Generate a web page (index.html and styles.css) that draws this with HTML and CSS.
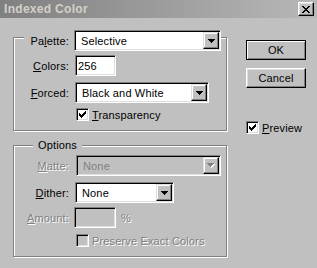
FILE: index.html
```html
<!DOCTYPE html>
<html>
<head>
<meta charset="utf-8">
<link rel="stylesheet" href="styles.css">
</head>
<body>
<div class="titlebar">
  <span class="title-text">Indexed Color</span>
  <div class="close"><svg width="8" height="7" viewBox="0 0 8 7" shape-rendering="crispEdges"><path d="M0 0h2v1h-2z M6 0h2v1h-2z M1 1h2v1h-2z M5 1h2v1h-2z M2 2h4v1h-4z M3 3h2v1h-2z M2 4h4v1h-4z M1 5h2v1h-2z M5 5h2v1h-2z M0 6h2v1h-2z M6 6h2v1h-2z" fill="#000"/></svg></div>
</div>
<div class="main">
  <div class="left">
    <div class="group group-main">
      <div class="row row-legend">
        <span class="lbl lbl-legend">Pa<u>l</u>ette:</span>
        <div class="combo combo-palette"><span class="combo-text">Selective</span><span class="dd"><svg width="7" height="4" viewBox="0 0 7 4" shape-rendering="crispEdges"><path d="M0 0h7v1h-7z M1 1h5v1h-5z M2 2h3v1h-3z M3 3h1v1h-1z" fill="#000"/></svg></span></div>
      </div>
      <div class="row row-colors">
        <span class="lbl"><u>C</u>olors:</span>
        <div class="field field-colors">256</div>
      </div>
      <div class="row row-forced">
        <span class="lbl"><u>F</u>orced:</span>
        <div class="combo combo-forced"><span class="combo-text">Black and White</span><span class="dd"><svg width="7" height="4" viewBox="0 0 7 4" shape-rendering="crispEdges"><path d="M0 0h7v1h-7z M1 1h5v1h-5z M2 2h3v1h-3z M3 3h1v1h-1z" fill="#000"/></svg></span></div>
      </div>
      <div class="row row-check row-transp">
        <span class="checkbox"><svg width="7" height="7" viewBox="0 0 7 7" shape-rendering="crispEdges"><path d="M6 0h1v1h-1z M5 1h2v1h-2z M0 2h1v1h-1z M4 2h3v1h-3z M0 3h2v1h-2z M3 3h3v1h-3z M0 4h5v1h-5z M1 5h3v1h-3z M2 6h1v1h-1z" fill="#000"/></svg></span>
        <span class="check-label"><u>T</u>ransparency</span>
      </div>
    </div>
    <div class="group group-options">
      <div class="legend">Options</div>
      <div class="row row-matte">
        <span class="lbl dis"><u>M</u>atte:</span>
        <div class="combo combo-matte disabled"><span class="combo-text">None</span><span class="dd"><svg width="8" height="5" viewBox="0 0 8 5" shape-rendering="crispEdges"><path d="M1 1h7v1h-7z M2 2h5v1h-5z M3 3h3v1h-3z M4 4h1v1h-1z" fill="#fff"/><path d="M0 0h7v1h-7z M1 1h5v1h-5z M2 2h3v1h-3z M3 3h1v1h-1z" fill="#808080"/></svg></span></div>
      </div>
      <div class="row row-dither">
        <span class="lbl"><u>D</u>ither:</span>
        <div class="combo combo-dither"><span class="combo-text">None</span><span class="dd"><svg width="7" height="4" viewBox="0 0 7 4" shape-rendering="crispEdges"><path d="M0 0h7v1h-7z M1 1h5v1h-5z M2 2h3v1h-3z M3 3h1v1h-1z" fill="#000"/></svg></span></div>
      </div>
      <div class="row row-amount">
        <span class="lbl dis"><u>A</u>mount:</span>
        <div class="field field-amount disabled"></div>
        <span class="pct dis">%</span>
      </div>
      <div class="row row-check row-preserve">
        <span class="checkbox disabled"></span>
        <span class="check-label dis">Preserve Exact Colors</span>
      </div>
    </div>
  </div>
  <div class="right">
    <div class="btn btn-default">OK</div>
    <div class="btn btn-cancel">Cancel</div>
    <div class="row row-preview">
      <span class="checkbox"><svg width="7" height="7" viewBox="0 0 7 7" shape-rendering="crispEdges"><path d="M6 0h1v1h-1z M5 1h2v1h-2z M0 2h1v1h-1z M4 2h3v1h-3z M0 3h2v1h-2z M3 3h3v1h-3z M0 4h5v1h-5z M1 5h3v1h-3z M2 6h1v1h-1z" fill="#000"/></svg></span>
      <span class="check-label"><u>P</u>review</span>
    </div>
  </div>
</div>
</body>
</html>
```
FILE: styles.css
```css
html, body {
  margin: 0;
  padding: 0;
}
body {
  width: 317px;
  height: 268px;
  overflow: hidden;
  background: #c0c0c0;
  font-family: "Liberation Sans", Arial, sans-serif;
  font-size: 11px;
  letter-spacing: 0.15px;
  color: #000;
}
u {
  text-decoration: underline;
  text-underline-offset: 1px;
}

/* title bar */
.titlebar {
  height: 18px;
  display: flex;
  align-items: center;
  justify-content: space-between;
  padding: 0 3px 0 4px;
  background: linear-gradient(to right, #808080, #b8b8b8);
}
.title-text {
  font-weight: bold;
  font-size: 12px;
  color: #d4d0c8;
  letter-spacing: 0.3px;
}
.close {
  width: 16px;
  height: 14px;
  box-sizing: border-box;
  background: #c0c0c0;
  border: 1px solid;
  border-color: #fff #000 #000 #fff;
  box-shadow: inset -1px -1px 0 #808080, inset 1px 1px 0 #dfdfdf;
  display: flex;
  align-items: center;
  justify-content: center;
}
.close svg { display: block; }

/* layout */
.main {
  display: flex;
  align-items: flex-start;
  padding-left: 13px;
}
.left {
  display: flex;
  flex-direction: column;
}
.right {
  margin-left: 19px;
  padding-top: 22px;
  display: flex;
  flex-direction: column;
  align-items: flex-start;
}

/* group boxes */
.group {
  box-sizing: border-box;
  width: 214px;
  border: 1px solid #808080;
  box-shadow: 1px 1px 0 #fff, inset 1px 1px 0 #fff;
  display: flex;
  flex-direction: column;
  align-items: flex-start;
  padding-bottom: 9px;
}
.group-main { margin-top: 19px; }
.group-options { margin-top: 14px; }

.legend {
  margin-top: -7px;
  margin-left: 19px;
  padding: 0 5px;
  line-height: 13px;
  height: 13px;
  background: #c0c0c0;
}

.row {
  display: flex;
  align-items: center;
}
.lbl {
  width: 55px;
  margin-right: 6px;
  text-align: right;
  white-space: nowrap;
}
.row-legend {
  margin-top: -8px;
  margin-left: 10px;
  background: #c0c0c0;
}
.lbl-legend {
  width: 45px;
  margin-right: 5px;
}
.row-colors { margin-top: 4px; }
.row-forced { margin-top: 6px; }
.row-transp { margin-top: 5px; }
.row-matte { margin-top: 3px; }
.row-dither { margin-top: 6px; }
.row-amount { margin-top: 4px; }
.row-preserve { margin-top: 6px; }
.row-check { margin-left: 62px; }

.dis {
  color: #808080;
  text-shadow: 1px 1px 0 #fff;
}

/* sunken controls */
.combo, .field {
  box-sizing: border-box;
  height: 21px;
  border: 1px solid;
  border-color: #808080 #fff #fff #808080;
  box-shadow: inset 1px 1px 0 #000, inset -1px -1px 0 #dfdfdf;
  background: #fff;
}
.combo {
  display: flex;
  align-items: stretch;
  padding: 1px;
}
.combo-text {
  flex: 1;
  display: flex;
  align-items: center;
  padding-left: 5px;
  white-space: nowrap;
  overflow: hidden;
}
.dd {
  width: 16px;
  box-sizing: border-box;
  background: #c0c0c0;
  border: 1px solid;
  border-color: #dfdfdf #000 #000 #dfdfdf;
  box-shadow: inset -1px -1px 0 #808080, inset 1px 1px 0 #fff;
  display: flex;
  align-items: center;
  justify-content: center;
}
.dd svg { display: block; }
.combo-palette { width: 147px; }
.combo-forced { width: 134px; }
.combo-matte { width: 145px; margin-left: 1px; }
.combo-dither { width: 99px; }
.combo.disabled { background: #c0c0c0; }
.combo.disabled .combo-text { color: #808080; }

.field {
  display: flex;
  align-items: center;
  padding-left: 2px;
}
.field-colors { width: 41px; }
.field-amount { width: 42px; margin-left: -1px; }
.field.disabled { background: #c0c0c0; }
.pct { margin-left: 5px; }

/* checkboxes */
.checkbox {
  box-sizing: border-box;
  width: 13px;
  height: 13px;
  border: 1px solid;
  border-color: #808080 #fff #fff #808080;
  box-shadow: inset 1px 1px 0 #000, inset -1px -1px 0 #dfdfdf;
  background: #fff;
  padding: 2px;
}
.checkbox svg { display: block; }
.checkbox.disabled { background: #c0c0c0; }
.check-label {
  margin-left: 3px;
  white-space: nowrap;
}

/* buttons */
.btn {
  box-sizing: border-box;
  width: 60px;
  height: 20px;
  display: flex;
  align-items: center;
  justify-content: center;
  background: #c0c0c0;
}
.btn-default {
  border: 1px solid #000;
  box-shadow: inset 1px 1px 0 #fff, inset -1px -1px 0 #808080;
}
.btn-cancel {
  margin-top: 8px;
  border: 1px solid;
  border-color: #fff #000 #000 #fff;
  box-shadow: inset -1px -1px 0 #808080, inset 1px 1px 0 #dfdfdf;
}
.row-preview { margin-top: 33px; }
```
